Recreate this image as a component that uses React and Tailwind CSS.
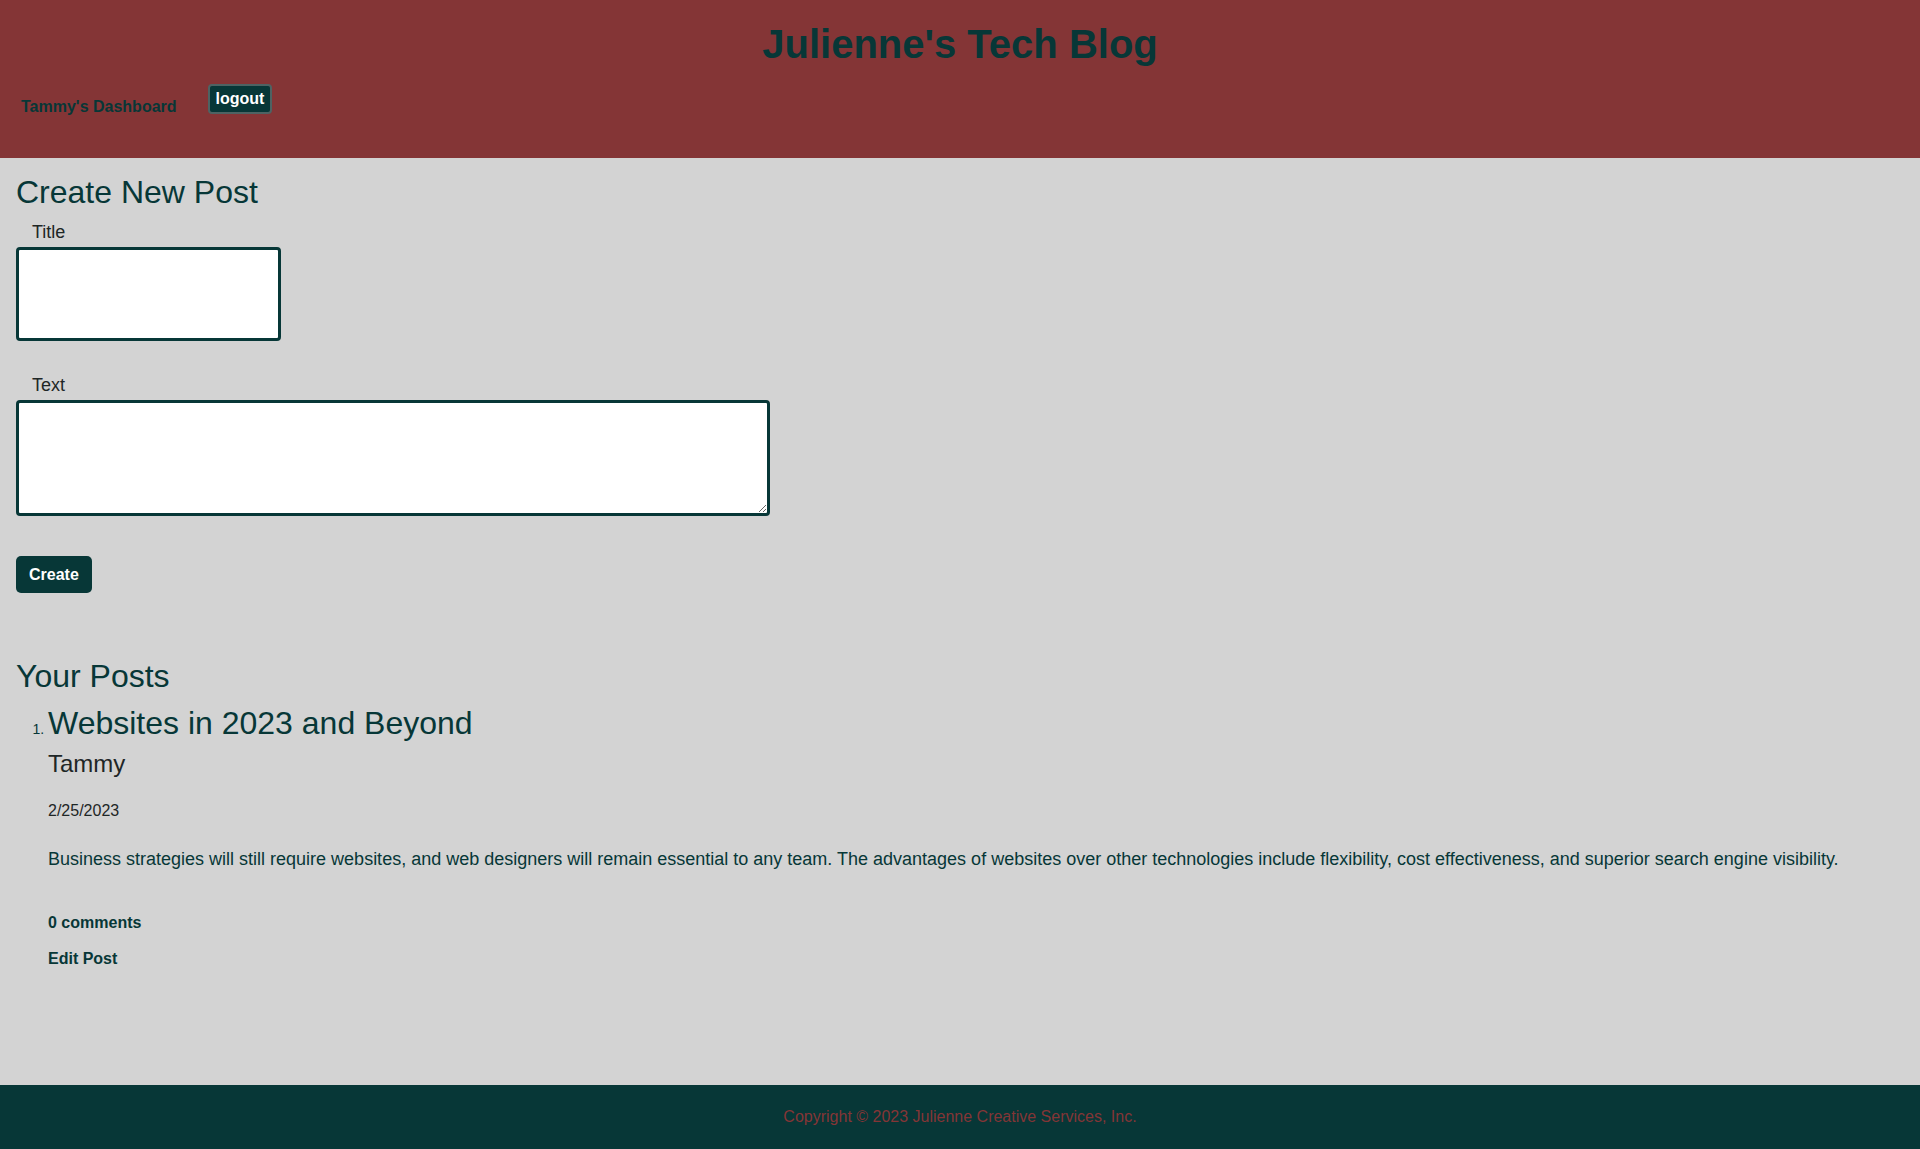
import { useState } from "react";

const posts = [
  {
    id: 1,
    title: "Websites in 2023 and Beyond",
    author: "Tammy",
    date: "2/25/2023",
    body: "Business strategies will still require websites, and web designers will remain essential to any team. The advantages of websites over other technologies include flexibility, cost effectiveness, and superior search engine visibility.",
    comments: 0,
  },
];

export default function App() {
  return (
    <div className="min-h-[1149px] flex flex-col bg-[#d3d3d3] text-[#073737] font-['Liberation_Sans',Arial,sans-serif]">
      <Header />
      <main className="flex-1 px-4 pt-[16px] pb-10">
        <NewPostForm />
        <YourPosts />
      </main>
      <footer className="h-[64px] bg-[#073737] flex items-center justify-center">
        <p className="text-[16px] leading-[18px] text-[#843536]">Copyright © 2023 Julienne Creative Services, Inc.</p>
      </footer>
    </div>
  );
}

function Header() {
  return (
    <header className="h-[158px] bg-[#843536] pt-[21px]">
      <h1 className="text-center text-[40px] leading-[46px] font-bold">Julienne's Tech Blog</h1>
      <nav className="mt-[17px] pl-[21px] flex items-start gap-[31px]">
        <a href="#" className="mt-[14px] text-[16px] leading-[18px] font-bold">Tammy's Dashboard</a>
        <button className="h-[30px] px-[6px] rounded-[4px] border-2 border-[#4d6363] bg-[#073737] text-white text-[16px] leading-[18px] font-bold">
          logout
        </button>
      </nav>
    </header>
  );
}

function NewPostForm() {
  const [title, setTitle] = useState("");
  const [text, setText] = useState("");

  return (
    <form onSubmit={(e) => e.preventDefault()}>
      <h2 className="text-[32px] leading-[37px]">Create New Post</h2>

      <label htmlFor="title" className="block mt-[11px] ml-4 text-[18px] leading-[21px] text-[#1e2626]">Title</label>
      <input
        id="title"
        value={title}
        onChange={(e) => setTitle(e.target.value)}
        className="block mt-[4px] w-[265px] h-[94px] bg-white border-[3px] border-[#073737] rounded-[4px] px-2 outline-none"
      />

      <label htmlFor="text" className="block mt-[34px] ml-4 text-[18px] leading-[21px] text-[#1e2626]">Text</label>
      <textarea
        id="text"
        value={text}
        onChange={(e) => setText(e.target.value)}
        className="block mt-[4px] w-[754px] h-[116px] bg-white border-[3px] border-[#073737] rounded-[4px] p-2 outline-none"
      />

      <button className="block mt-[40px] h-[37px] px-[13px] rounded-[5px] bg-[#073737] text-white text-[16px] leading-[18px] font-bold">
        Create
      </button>
    </form>
  );
}

function YourPosts() {
  return (
    <section className="mt-[65px]">
      <h2 className="text-[32px] leading-[37px]">Your Posts</h2>
      <ol className="list-decimal pl-[32px] mt-[10px] marker:text-[14px]">
        {posts.map((p) => (
          <li key={p.id} className="text-[14px]">
            <h2 className="text-[32px] leading-[37px]">{p.title}</h2>
            <h3 className="mt-[8px] text-[24px] leading-[28px] text-[#1e2626]">{p.author}</h3>
            <p className="mt-[24px] text-[16px] leading-[18px] text-[#1e2626]">{p.date}</p>
            <p className="mt-[29px] text-[18px] leading-[21px]">{p.body}</p>
            <p className="mt-[44px] text-[16px] leading-[18px] font-bold">{p.comments} comments</p>
            <a href="#" className="block mt-[18px] text-[16px] leading-[18px] font-bold">Edit Post</a>
          </li>
        ))}
      </ol>
    </section>
  );
}
